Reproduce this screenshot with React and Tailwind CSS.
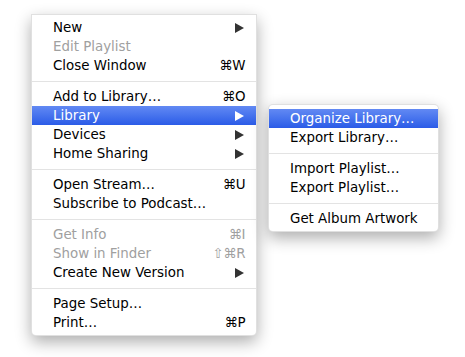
import React from 'react';

const mainItems = [
  { label: 'New', arrow: true },
  { label: 'Edit Playlist', disabled: true },
  { label: 'Close Window', shortcut: '⌘W' },
  { sep: true },
  { label: 'Add to Library…', shortcut: '⌘O' },
  { label: 'Library', arrow: true, active: true },
  { label: 'Devices', arrow: true },
  { label: 'Home Sharing', arrow: true },
  { sep: true },
  { label: 'Open Stream…', shortcut: '⌘U' },
  { label: 'Subscribe to Podcast…' },
  { sep: true },
  { label: 'Get Info', shortcut: '⌘I', disabled: true },
  { label: 'Show in Finder', shortcut: '⇧⌘R', disabled: true },
  { label: 'Create New Version', arrow: true },
  { sep: true },
  { label: 'Page Setup…' },
  { label: 'Print…', shortcut: '⌘P' },
];

const subItems = [
  { label: 'Organize Library…', active: true },
  { label: 'Export Library…' },
  { sep: true },
  { label: 'Import Playlist…' },
  { label: 'Export Playlist…' },
  { sep: true },
  { label: 'Get Album Artwork' },
];

function Arrow({ active }) {
  return (
    <svg width="9" height="10" viewBox="0 0 9 10" className="shrink-0">
      <path d="M0 0 L9 5 L0 10 Z" fill={active ? '#ffffff' : '#333333'} />
    </svg>
  );
}

function MenuRow({ item }) {
  if (item.sep) {
    return (
      <div className="h-[12px] pt-[6px]">
        <div className="h-px bg-[#e3e3e3]" />
      </div>
    );
  }
  const color = item.active
    ? 'text-white bg-gradient-to-b from-[#6289f3] to-[#2b5be7]'
    : item.disabled
    ? 'text-[#a0a0a0]'
    : 'text-black';
  return (
    <div className={`flex h-[19px] items-center justify-between pl-[21px] pr-[11px] ${color}`}>
      <span>{item.label}</span>
      {item.shortcut && <span className="tracking-[-0.5px]">{item.shortcut}</span>}
      {item.arrow && <span className="pr-px"><Arrow active={item.active} /></span>}
    </div>
  );
}

export default function App() {
  return (
    <div
      className="flex min-h-[357px] w-[465px] items-start bg-white text-[13.4px] leading-[19px]"
      style={{ fontFamily: '"DejaVu Sans", "Liberation Sans", sans-serif' }}
    >
      <div className="ml-[31px] mt-[14px] w-[226px] rounded-b-[5px] border border-[rgba(0,0,0,0.12)] bg-white pb-[3px] pt-[3px] shadow-[0_6px_16px_rgba(0,0,0,0.32)]">
        {mainItems.map((item, i) => (
          <MenuRow key={i} item={item} />
        ))}
      </div>
      <div className="ml-[11px] mt-[104px] w-[171px] rounded-[5px] border border-[rgba(0,0,0,0.12)] bg-white pb-[3px] pt-[4px] shadow-[0_6px_16px_rgba(0,0,0,0.32)]">
        {subItems.map((item, i) => (
          <MenuRow key={i} item={item} />
        ))}
      </div>
    </div>
  );
}
